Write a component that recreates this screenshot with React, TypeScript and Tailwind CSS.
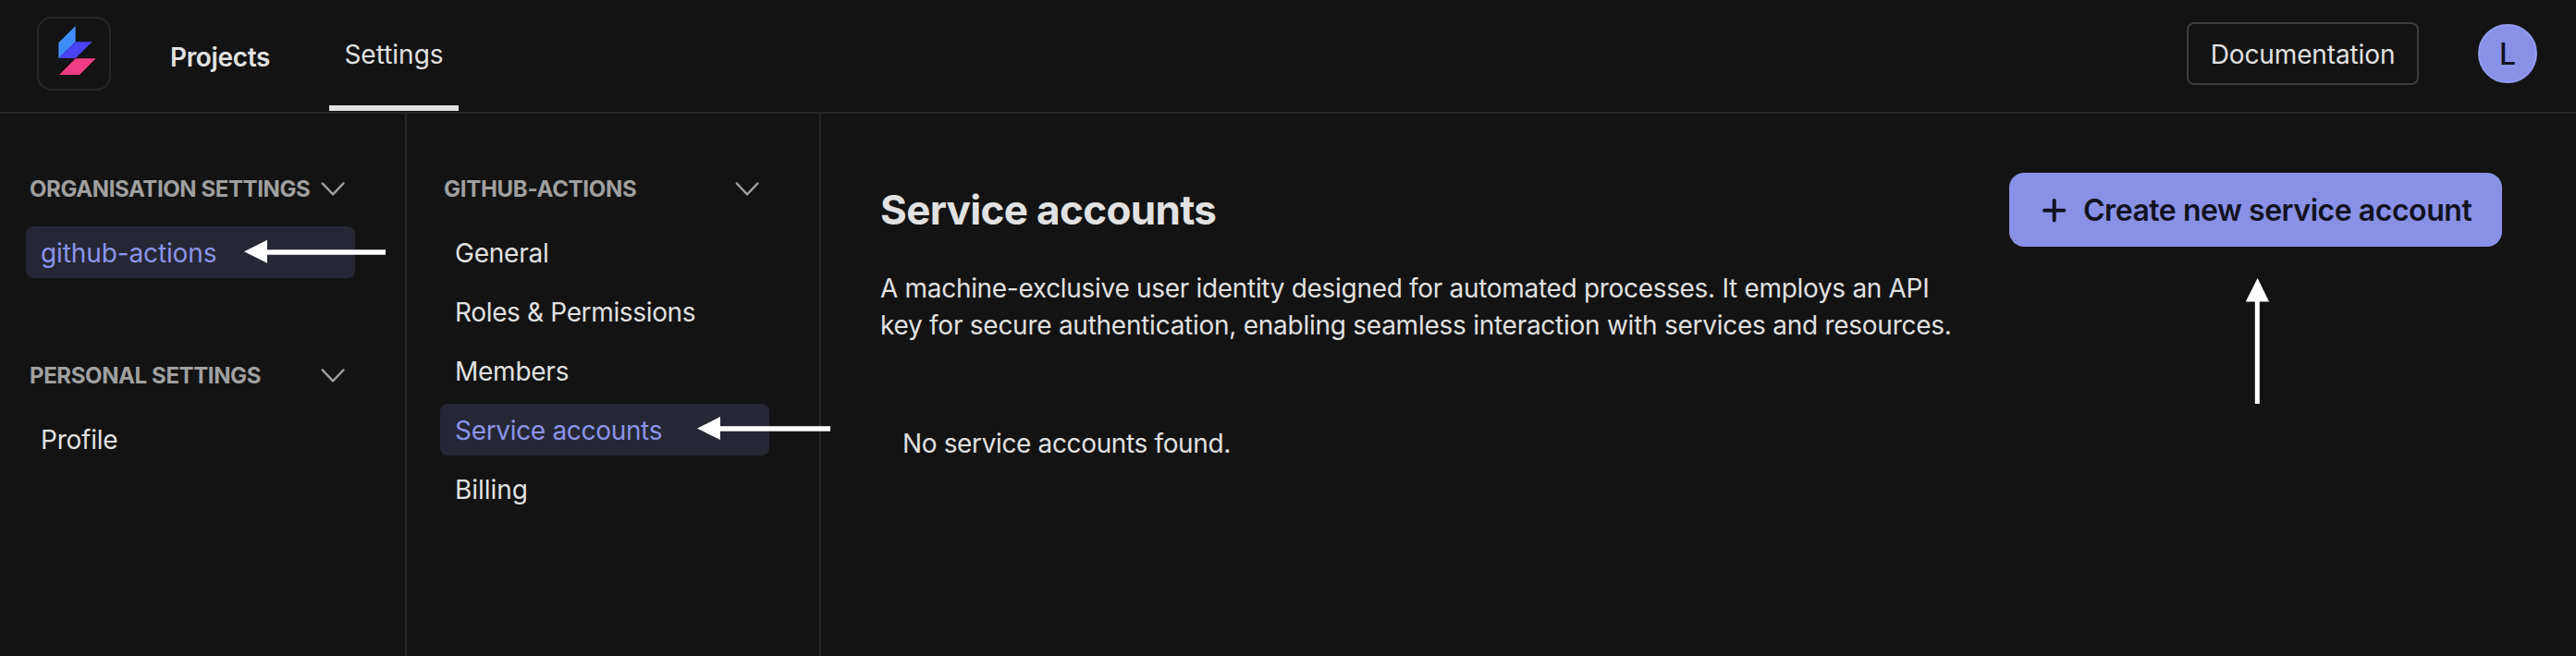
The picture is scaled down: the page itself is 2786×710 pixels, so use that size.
import React from "react";

function Logo() {
  return (
    <div className="flex h-20 w-20 items-center justify-center rounded-2xl border-2 border-[#262626]">
      <svg width="76" height="76" viewBox="42 20 76 76">
        <path d="M81.7 28v17.2L63.3 63V46.2z" fill="#3f8cf8" />
        <path d="M81.7 45.2h18L81.7 63H63.3z" fill="#4a43f5" />
        <path d="M81.7 63.3h22L86 81H64z" fill="#ee3d84" />
      </svg>
    </div>
  );
}

function Chevron() {
  return (
    <svg width="28" height="28" viewBox="0 0 28 28" fill="none" className="shrink-0">
      <path d="M2.7 8.4l11.4 12 11.4-12" stroke="#a0a0a0" strokeWidth="2.3" strokeLinecap="round" strokeLinejoin="round" />
    </svg>
  );
}

type Item = { label: string; tracking: string };

function Section({
  title,
  tracking,
  items,
  active,
}: {
  title: string;
  tracking: string;
  items: Item[];
  active?: string;
}) {
  return (
    <section>
      <div className="flex h-12 items-center justify-between pr-[10px]">
        <h2 className={`whitespace-nowrap pt-0.5 text-2xl font-bold text-[#a0a0a0] ${tracking}`}>{title}</h2>
        <Chevron />
      </div>
      <ul className="-ml-1 mt-[17px] flex flex-col gap-2">
        {items.map(({ label, tracking: t }) => (
          <li
            key={label}
            className={`flex h-14 items-center rounded-lg px-4 pt-0.5 ${t} ${
              label === active ? "bg-[#262734] text-[#8b94ea]" : ""
            }`}
          >
            {label}
          </li>
        ))}
      </ul>
    </section>
  );
}

const menu: Item[] = [
  { label: "General", tracking: "tracking-[-0.22px]" },
  { label: "Roles & Permissions", tracking: "tracking-[-0.35px]" },
  { label: "Members", tracking: "tracking-[-0.25px]" },
  { label: "Service accounts", tracking: "tracking-[-0.32px]" },
  { label: "Billing", tracking: "tracking-[-0.05px]" },
];

export default function App() {
  return (
    <div className="relative flex h-[710px] w-[2786px] flex-col overflow-hidden bg-[#131313] font-['Inter',sans-serif] text-[28px] leading-10 text-[#e1e1e1]">
      <header className="flex h-[123px] shrink-0 border-b-2 border-[#262626] pl-10 pr-[42px]">
        <div className="pt-[18px]">
          <Logo />
        </div>
        <nav className="flex">
          <a className="ml-16 w-[108px] pt-[42px] font-semibold tracking-[-0.36px]">Projects</a>
          <a className="ml-16 flex h-[120px] w-[140px] justify-center border-b-[6px] border-[#e1e1e1] pt-[39px]">
            Settings
          </a>
        </nav>
        <div className="ml-auto flex h-[116px] items-center gap-16">
          <button className="flex h-[68px] w-[251px] items-center justify-center rounded-lg border-2 border-[#3c3c3c] pt-0.5 tracking-[-0.12px]">
            Documentation
          </button>
          <div className="flex h-16 w-16 items-center justify-center rounded-full border-2 border-[#929bef] bg-[#8891e6] pt-0.5 text-[32px] font-medium text-[#11131f]">
            L
          </div>
        </div>
      </header>

      <div className="flex grow">
        <aside className="flex w-[440px] shrink-0 flex-col gap-[81px] border-r-2 border-[#262626] pl-8 pr-[54px] pt-[57px]">
          <Section
            title="ORGANISATION SETTINGS"
            tracking="tracking-[-0.41px]"
            items={[{ label: "github-actions", tracking: "tracking-[-0.12px]" }]}
            active="github-actions"
          />
          <Section
            title="PERSONAL SETTINGS"
            tracking="tracking-[-0.39px]"
            items={[{ label: "Profile", tracking: "tracking-[-0.23px]" }]}
          />
        </aside>
        <aside className="w-[448px] shrink-0 border-r-2 border-[#262626] pl-10 pr-[54px] pt-[57px]">
          <Section title="GITHUB-ACTIONS" tracking="tracking-[-0.29px]" items={menu} active="Service accounts" />
        </aside>
        <main className="grow pl-16 pr-20 pt-16">
          <div className="flex items-start justify-between">
            <div className="w-[1180px]">
              <h1 className="text-[44px] font-bold leading-[80px] tracking-[-0.67px]">Service accounts</h1>
              <p className="mt-[25px] whitespace-nowrap tracking-[-0.26px]">
                <span className="tracking-[-0.31px]">
                  A machine-exclusive user identity designed for automated processes. It employs an API
                </span>
                <br />
                key for secure authentication, enabling seamless interaction with services and resources.
              </p>
            </div>
            <button className="flex h-20 w-[533px] items-center rounded-2xl bg-[#8891e6] pl-[34px] text-[32px] font-semibold tracking-[-0.46px] text-[#11131f]">
              <svg width="30" height="30" viewBox="0 0 30 30" className="mr-4 shrink-0" stroke="#11131f" strokeWidth="4" strokeLinecap="round">
                <path d="M14.7 5v21.400M4 15.700h21.400" />
              </svg>
              <span className="whitespace-nowrap pt-0.5">Create new service account</span>
            </button>
          </div>
          <p className="ml-6 mt-[88px] tracking-[-0.36px]">No service accounts found.</p>
        </main>
      </div>

      <svg className="pointer-events-none absolute inset-0" width="2786" height="710" fill="#ffffff">
        <path d="M264 272.300l25-12.600v10.500h128v5.600H289v9z" />
        <path d="M754 463.700l25-12.700v10.200h119v5.600H779v9.200z" />
        <path d="M2441.600 301l12.500 25.500h-10.300V437h-5V326.500h-10z" />
      </svg>
    </div>
  );
}
